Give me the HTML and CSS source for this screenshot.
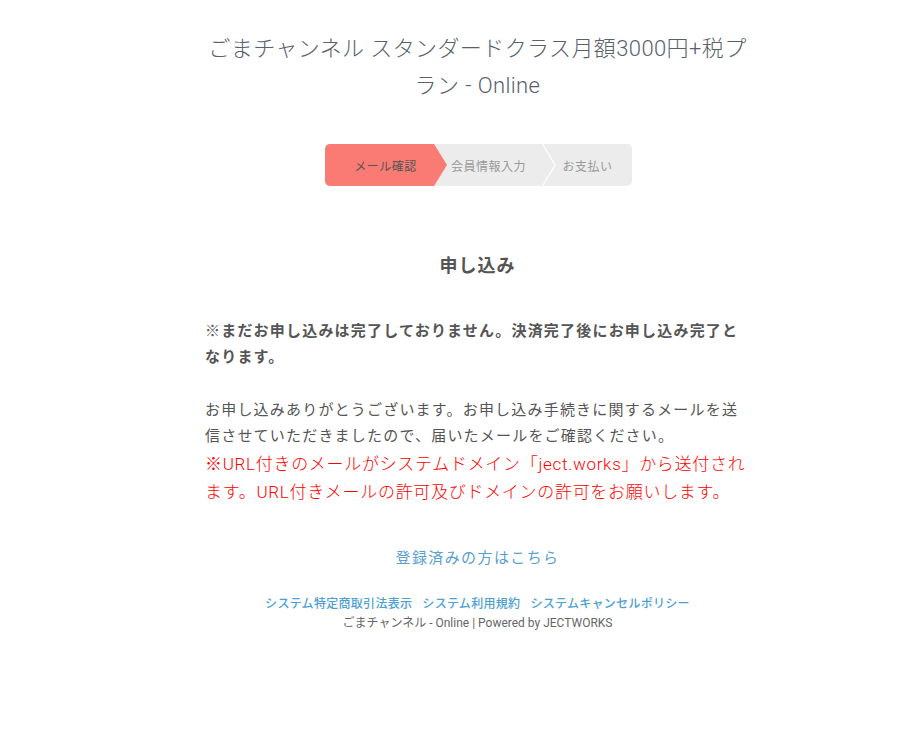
FILE: index.html
```html
<!DOCTYPE html>
<html lang="ja">
<head>
  <meta charset="UTF-8">
  <meta name="viewport" content="width=device-width, initial-scale=1.0">
  <title>申し込み - ごまチャンネル - Online</title>
  <link rel="stylesheet" href="styles.css">
</head>
<body>

  <div class="page">
    <h1 class="plan-title">ごまチャンネル スタンダードクラス月額3000円+税プラン - Online</h1>

    <div class="steps">
      <div class="step active">メール確認</div>
      <div class="step">
        会員情報入力
        <svg class="sep" width="14" height="42" viewBox="0 0 14 42"><polyline points="0.5,0 13,21 0.5,42" fill="none" stroke="#fff" stroke-width="1.2"/></svg>
      </div>
      <div class="step">お支払い</div>
    </div>

    <h2 class="section-title">申し込み</h2>

    <p class="notice">※まだお申し込みは完了しておりません。決済完了後にお申し込み完了となります。</p>

    <div class="message">
      <p>お申し込みありがとうございます。お申し込み手続きに関するメールを送信させていただきましたので、届いたメールをご確認ください。</p>
      <p class="warn">※URL付きのメールがシステムドメイン「ject.works」から送付されます。URL付きメールの許可及びドメインの許可をお願いします。</p>
    </div>

    <a href="#" class="login-link">登録済みの方はこちら</a>

    <footer class="footer">
      <div class="footer-links">
        <a href="#">システム特定商取引法表示</a>
        <a href="#">システム利用規約</a>
        <a href="#">システムキャンセルポリシー</a>
      </div>
      <div class="copy">ごまチャンネル - Online | Powered by JECTWORKS</div>
    </footer>
  </div>

</body>
</html>
```

FILE: styles.css
```css
body {
  margin: 0px;
  background-color: #fff;
  color: #555;
  font-family: 'Roboto', 'Noto Sans CJK JP', sans-serif;
}

.page {
  width: 545px;
  margin-left: 205px;
  padding-top: 30px;
  text-align: center;
}

.plan-title {
  margin: 0;
  font-size: 22px;
  font-weight: 300;
  line-height: 37px;
  letter-spacing: 0.4px;
  color: #59616c;
}

/* steps */
.steps {
  display: flex;
  width: 307px;
  height: 42px;
  margin: 40px 0 0 120px;
  border-radius: 5px;
  overflow: hidden;
  background-color: #ececec;
  font-size: 12px;
  letter-spacing: 0.5px;
}

.step {
  position: relative;
  display: flex;
  align-items: center;
  justify-content: center;
  color: #9a9a9a;
}

.step:nth-child(1) { width: 109px; padding-left: 12px; box-sizing: border-box; }
.step:nth-child(2) { width: 109px; }
.step:nth-child(3) { width: 89px; }

.step.active {
  background-color: #fa7b73;
  color: #555;
}

.step.active::after {
  content: '';
  position: absolute;
  top: 0;
  right: -13px;
  width: 13px;
  height: 42px;
  background-color: #fa7b73;
  clip-path: polygon(0 0, 100% 50%, 0 100%);
}

.sep {
  position: absolute;
  top: 0;
  right: -13px;
}

/* content */
.section-title {
  margin: 67px 0 0;
  font-size: 18px;
  line-height: 26px;
  font-weight: bold;
  letter-spacing: 1px;
  color: #555;
}

.notice {
  margin: 39px 0 0;
  text-align: left;
  font-size: 15px;
  line-height: 26px;
  font-weight: bold;
  letter-spacing: 1.2px;
}

.message {
  margin-top: 27px;
  text-align: left;
}

.message p {
  margin: 0;
  font-size: 15px;
  line-height: 26px;
  letter-spacing: 1.2px;
}

.message .warn {
  margin-top: 1px;
  font-size: 17px;
  font-weight: 300;
  line-height: 28px;
  letter-spacing: 0.7px;
  color: #ff0000;
}

.login-link {
  display: block;
  margin-top: 39px;
  font-size: 15px;
  line-height: 26px;
  letter-spacing: 1.4px;
  color: #5a9fcf;
  text-decoration: none;
}

.footer {
  margin-top: 24px;
  font-size: 12px;
  line-height: 19px;
}

.footer-links {
  display: flex;
  justify-content: center;
  gap: 10px;
}

.footer-links a {
  color: #4da0d2;
  font-weight: 500;
  letter-spacing: 0.3px;
  text-decoration: none;
}

.copy {
  color: #666;
}
```
